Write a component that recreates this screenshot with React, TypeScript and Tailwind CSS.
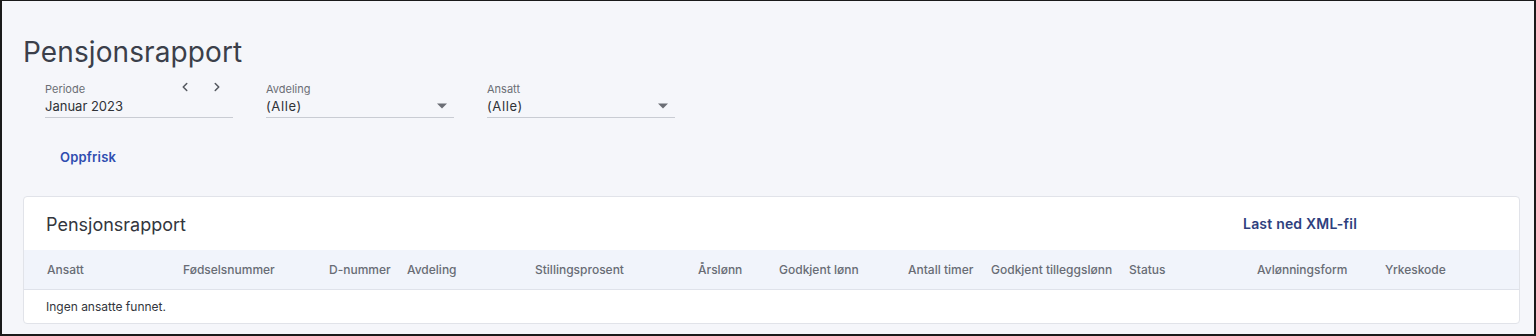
import React from "react";

const cols: { label: string; w: number }[] = [
  { label: "Ansatt", w: 136 },
  { label: "Fødselsnummer", w: 146 },
  { label: "D-nummer", w: 78 },
  { label: "Avdeling", w: 128 },
  { label: "Stillingsprosent", w: 163 },
  { label: "Årslønn", w: 81 },
  { label: "Godkjent lønn", w: 129 },
  { label: "Antall timer", w: 83 },
  { label: "Godkjent tilleggslønn", w: 138 },
  { label: "Status", w: 128 },
  { label: "Avlønningsform", w: 128 },
  { label: "Yrkeskode", w: 100 },
];

function Caret() {
  return (
    <svg width="10" height="6" viewBox="0 0 10 5" className="text-[#6b6e75]">
      <path d="M0 0 L10 0 L5 5 Z" fill="currentColor" />
    </svg>
  );
}

export default function App() {
  return (
    <div
      className="w-[1536px] h-[336px] bg-[#f5f6fa] border-t border-l-2 border-r-2 border-b-2 border-[#1a1a1a] box-border overflow-hidden text-[#33363d]"
      style={{ fontFamily: "Inter, 'Noto Sans', sans-serif" }}
    >
      <div className="pl-[21px] pr-[15px]">
        <h1 className="pt-[33px] text-[28px] leading-[36px] font-normal text-[#3b3f4a] tracking-[0.1px]">
          Pensjonsrapport
        </h1>
        <div className="flex pl-[22px] mt-[12px] gap-[33px]">
          <div className="w-[188px] border-b border-[#c9ccd3] pb-[2px] relative">
            <div className="text-[11px] leading-[14px] text-[#6b6e75] mb-[2px]">Periode</div>
            <div className="text-[13px] leading-[17px] text-[#2f3237]">Januar 2023</div>
            <div className="absolute top-[-2px] right-[9px] flex gap-[18px] text-[#555960]">
              <svg width="14" height="14" viewBox="0 0 24 24" fill="none" stroke="currentColor" strokeWidth="2.6" strokeLinecap="round" strokeLinejoin="round"><path d="M15 6l-6 6 6 6" /></svg>
              <svg width="14" height="14" viewBox="0 0 24 24" fill="none" stroke="currentColor" strokeWidth="2.6" strokeLinecap="round" strokeLinejoin="round"><path d="M9 6l6 6-6 6" /></svg>
            </div>
          </div>
          <div className="w-[188px] border-b border-[#c9ccd3] pb-[2px] relative">
            <div className="text-[11px] leading-[14px] text-[#6b6e75] mb-[2px]">Avdeling</div>
            <div className="text-[13px] leading-[17px] text-[#2f3237] tracking-[0.6px]">(Alle)</div>
            <div className="absolute right-[7px] top-[21px]"><Caret /></div>
          </div>
          <div className="w-[188px] border-b border-[#c9ccd3] pb-[2px] relative">
            <div className="text-[11px] leading-[14px] text-[#6b6e75] mb-[2px]">Ansatt</div>
            <div className="text-[13px] leading-[17px] text-[#2f3237] tracking-[0.6px]">(Alle)</div>
            <div className="absolute right-[7px] top-[21px]"><Caret /></div>
          </div>
        </div>
        <div className="pl-[37px] mt-[31px] text-[13px] leading-[17px] font-semibold text-[#2f4db0] tracking-[0.2px]">
          Oppfrisk
        </div>
        <div className="mt-[30px] w-[1497px] bg-white border border-[#e1e3e9] rounded-[4px]">
          <div className="flex items-center justify-between h-[53px] pl-[22px] pr-[162px]">
            <div className="text-[18px] leading-[24px] text-[#33363d] pt-[3px]">Pensjonsrapport</div>
            <div className="text-[14px] font-semibold text-[#2e3f7e] tracking-[0.2px]">Last ned XML-fil</div>
          </div>
          <div className="flex h-[40px] items-center bg-[#f1f4fb] border-b border-[#dfe2ea] pl-[23px] text-[12px] font-medium text-[#686c75]">
            {cols.map((c) => (
              <div key={c.label} style={{ width: c.w }} className="shrink-0 whitespace-nowrap">
                {c.label}
              </div>
            ))}
          </div>
          <div className="h-[33px] flex items-center pl-[22px] text-[12px] text-[#33363d]">
            Ingen ansatte funnet.
          </div>
        </div>
      </div>
    </div>
  );
}
